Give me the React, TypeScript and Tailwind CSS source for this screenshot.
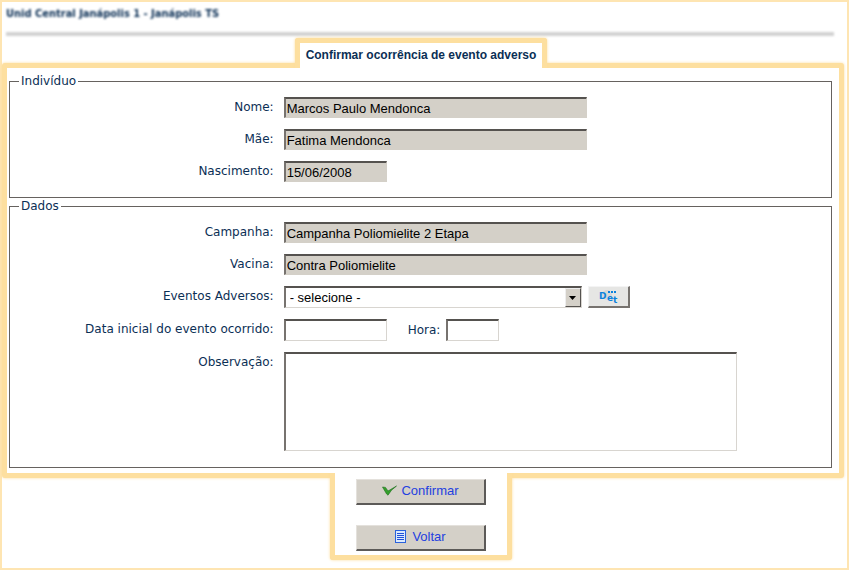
import type { ReactNode } from 'react';

const inset =
  'border-t-2 border-l-2 border-r border-b border-t-[#55524f] border-l-[#77736f] text-black text-[13px] leading-4 outline-none rounded-none';
const locked = 'bg-[#d4d0c8] border-r-[#d4d0c8] border-b-[#d4d0c8]';
const open = 'bg-white border-r-[#d8d5d0] border-b-[#d8d5d0]';
const ui = "font-['Liberation_Sans',Arial,sans-serif]";
const glow = 'border-[#fddf9f] bg-white shadow-[0_0_3px_#fddc98]';

function Row({ id, label, children }: { id: string; label: string; children: ReactNode }) {
  return (
    <div className="grid grid-cols-[1fr_2fr] items-start">
      <label htmlFor={id} className="pr-[10px] pt-[2px] text-right leading-4 whitespace-nowrap">
        {label}
      </label>
      <div className="flex items-center">{children}</div>
    </div>
  );
}

function LockedField({ id, label, value, width = 'w-[303px]' }: { id: string; label: string; value: string; width?: string }) {
  return (
    <Row id={id} label={label}>
      <input id={id} readOnly value={value} className={`h-[21px] px-px ${width} ${inset} ${locked} ${ui}`} />
    </Row>
  );
}

function Group({ title, children }: { title: string; children: ReactNode }) {
  return (
    <fieldset className="min-w-0 border border-[#66625f] pt-2 pb-[15px] last:pb-4">
      <legend className="ml-[9px] px-[2px] leading-4">{title}</legend>
      <div className="flex flex-col gap-[11px]">{children}</div>
    </fieldset>
  );
}

function ActionButton({ icon, children }: { icon: ReactNode; children: ReactNode }) {
  return (
    <button
      type="button"
      className={`flex h-[26px] w-[130px] items-center justify-center gap-1 border-t border-l border-r-2 border-b-2 border-t-[#e4e1dc] border-l-[#e4e1dc] border-r-[#5c5a58] border-b-[#5c5a58] bg-[#d4d0c8] pb-[2px] text-[13px] text-[#2340e0] ${ui}`}
    >
      {icon}
      {children}
    </button>
  );
}

function CheckIcon() {
  return (
    <svg width="15" height="11" viewBox="0 0 15 11" aria-hidden="true">
      <path d="M0.5 2 L3.5 2.4 L6 6 L14.5 1 L9.5 5.2 L6 10.2 L4.6 9 Z" fill="#35a02c" stroke="#1d6e1c" strokeWidth="0.6" />
    </svg>
  );
}

function PageIcon() {
  return (
    <svg width="11" height="13" viewBox="0 0 11 13" className="mr-[2px]" aria-hidden="true">
      <rect x="0.5" y="0.5" width="10" height="12" fill="#dbeafe" stroke="#2a62dc" />
      <path d="M2 3.5h7M2 5.5h7M2 7.5h7M2 9.5h7" stroke="#2050d8" />
    </svg>
  );
}

function DetailIcon() {
  return (
    <svg width="19" height="17" viewBox="0 0 19 17" aria-hidden="true" fill="#0b82dc" fontFamily="DejaVu Sans, sans-serif" fontWeight="bold">
      <circle cx="8" cy="7" r="5" fill="#d8d8d8" />
      <text x="0" y="11" fontSize="9">D</text>
      <text x="8" y="13" fontSize="9">e</text>
      <text x="14" y="15" fontSize="9">t</text>
      <path d="M9 3h2v2H9zM12 3h2v2h-2zM15 3h2v2h-2z" />
    </svg>
  );
}

export default function App() {
  return (
    <div className="flex min-h-screen flex-col border-2 border-[#fee5b2] bg-white font-['DejaVu_Sans',Verdana,sans-serif] text-[12px] text-[#0b2f55]">
      <header className="pt-1 pr-[13px] pl-1">
        <h1 className="font-['DejaVu_Sans_Condensed','DejaVu_Sans',sans-serif] text-[11px] leading-4 font-bold blur-[1px]">
          Unid Central Janápolis 1 - Janápolis TS
        </h1>
        <div className="mt-[10px] h-1 bg-[#d2d2d2] blur-[1px]" />
      </header>

      <main className="mr-[3px] flex flex-col items-center">
        <div className={`relative z-10 mt-[2px] mr-1 -mb-[5px] rounded-t-[3px] border-5 border-b-0 px-[6px] pt-1 pb-[5px] [clip-path:inset(-4px_-4px_0_-4px)] ${glow}`}>
          <h2 className={`text-[12px] leading-4 font-bold whitespace-nowrap ${ui}`}>Confirmar ocorrência de evento adverso</h2>
        </div>

        <section className={`w-full rounded-[3px] border-5 py-[5px] pr-[7px] pl-[2px] ${glow}`}>
          <Group title="Indivíduo">
            <LockedField id="nome" label="Nome:" value="Marcos Paulo Mendonca" />
            <LockedField id="mae" label="Mãe:" value="Fatima Mendonca" />
            <LockedField id="nascimento" label="Nascimento:" value="15/06/2008" width="w-[103px]" />
          </Group>
          <Group title="Dados">
            <LockedField id="campanha" label="Campanha:" value="Campanha Poliomielite 2 Etapa" />
            <LockedField id="vacina" label="Vacina:" value="Contra Poliomielite" />
            <Row id="eventos" label="Eventos Adversos:">
              <div className="relative">
                <select id="eventos" className={`block h-[22px] w-[298px] appearance-none pl-1 ${inset} ${open} ${ui}`}>
                  <option>- selecione -</option>
                </select>
                <span className="pointer-events-none absolute top-[2px] right-px bottom-px flex w-4 items-center justify-center border border-r-[#55524f] border-b-[#55524f] border-t-[#eeeeee] border-l-[#eeeeee] bg-[#d4d0c8]">
                  <svg width="7" height="4" viewBox="0 0 7 4" aria-hidden="true">
                    <path d="M0 0h7L3.5 4z" fill="#000" />
                  </svg>
                </span>
              </div>
              <button
                type="button"
                aria-label="Detalhes"
                className="ml-[6px] flex h-[22px] w-[42px] items-center justify-center border-t border-l border-r-2 border-b-2 border-t-[#f4f4f4] border-l-[#f4f4f4] border-r-[#77736f] border-b-[#77736f] bg-[#e6e6e4]"
              >
                <DetailIcon />
              </button>
            </Row>
            <Row id="data" label="Data inicial do evento ocorrido:">
              <input id="data" className={`h-[22px] w-[103px] px-px ${inset} ${open} ${ui}`} />
              <label htmlFor="hora" className="ml-[21px] pr-[6px] leading-4">
                Hora:
              </label>
              <input id="hora" className={`h-[22px] w-[53px] px-px ${inset} ${open} ${ui}`} />
            </Row>
            <Row id="obs" label="Observação:">
              <textarea id="obs" className={`block h-[99px] w-[453px] resize-none px-px ${inset} ${open} ${ui}`} />
            </Row>
          </Group>
        </section>

        <div className={`relative z-10 -mt-[5px] mr-1 flex flex-col items-center gap-5 rounded-b-[3px] border-5 border-t-0 px-[21px] pt-[6px] pb-1 [clip-path:inset(0_-4px_-4px_-4px)] ${glow}`}>
          <ActionButton icon={<CheckIcon />}>Confirmar</ActionButton>
          <ActionButton icon={<PageIcon />}>Voltar</ActionButton>
        </div>
      </main>
    </div>
  );
}
